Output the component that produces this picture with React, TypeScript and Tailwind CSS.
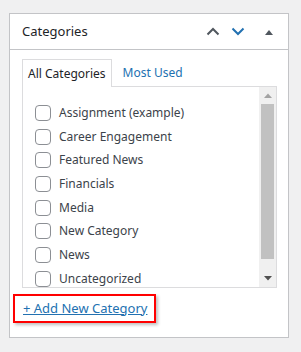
import React from "react";

const items = [
  "Assignment (example)",
  "Career Engagement",
  "Featured News",
  "Financials",
  "Media",
  "New Category",
  "News",
  "Uncategorized",
];

export default function App() {
  return (
    <div
      className="w-[301px] h-[352px] bg-[#f0f0f1] pt-[13px] pl-[9px]"
      style={{ fontFamily: '"Noto Sans", "Open Sans", sans-serif' }}
    >
      <div className="w-[280px] h-[325px] border border-[#c3c4c7] bg-white flex flex-col">
        <div className="h-[36px] border-b border-[#c3c4c7] flex items-center pl-[12px] shrink-0">
          <span className="text-[13px] text-[#1d2327] flex-1">Categories</span>
          <svg width="14" height="9" viewBox="0 0 14 9" className="mr-[11px]">
            <path d="M1.5 7.5 L7 2 L12.5 7.5" fill="none" stroke="#50575e" strokeWidth="2" />
          </svg>
          <svg width="14" height="9" viewBox="0 0 14 9" className="mr-[20px]">
            <path d="M1.5 1.5 L7 7 L12.5 1.5" fill="none" stroke="#2271b1" strokeWidth="2" />
          </svg>
          <svg width="8" height="6" viewBox="0 0 8 6" className="mr-[15px]">
            <path d="M0 6 L4 1 L8 6 Z" fill="#50575e" />
          </svg>
        </div>
        <div className="pl-[12px] pt-[9px]">
          <div className="flex items-end h-[27px]">
            <div className="relative z-10 h-[28px] -mb-px border border-b-0 border-[#dcdcde] bg-white px-[5px] flex items-center text-[12px] text-[#1d2327] whitespace-nowrap">
              All Categories
            </div>
            <div className="h-[27px] flex items-center ml-[11px] text-[12px] text-[#2271b1] whitespace-nowrap">Most Used</div>
          </div>
          <div className="w-[255px] h-[202px] border border-[#dcdcde] flex">
            <div className="flex-1 pt-[14px] pl-[12px]">
              {items.map((t) => (
                <div key={t} className="h-[23.7px] flex items-center">
                  <span className="w-[16px] h-[16px] rounded-[4px] border border-[#8c8f94] bg-white shrink-0" />
                  <span className="ml-[8px] text-[12px] text-[#3c434a] whitespace-nowrap">{t}</span>
                </div>
              ))}
            </div>
            <div className="w-[17px] bg-[#f0f0f0] flex flex-col">
              <div className="h-[17px] flex items-center justify-center">
                <svg width="8" height="5" viewBox="0 0 8 5">
                  <path d="M0 5 L4 0.5 L8 5 Z" fill="#a3a3a3" />
                </svg>
              </div>
              <div className="h-[155px] mx-[2px] bg-[#c1c1c1]" />
              <div className="flex-1 flex items-end justify-center pb-[6px]">
                <svg width="8" height="5" viewBox="0 0 8 5">
                  <path d="M0 0 L4 4.5 L8 0 Z" fill="#505050" />
                </svg>
              </div>
            </div>
          </div>
        </div>
        <div className="ml-[3px] mt-[6px] w-[143px] h-[29px] border-2 border-[#ff0000] shadow-[2px_2px_3px_rgba(0,0,0,0.25)] flex items-center pl-[8px]">
          <span className="text-[13px] text-[#2271b1] underline whitespace-nowrap">+ Add New Category</span>
        </div>
      </div>
    </div>
  );
}
